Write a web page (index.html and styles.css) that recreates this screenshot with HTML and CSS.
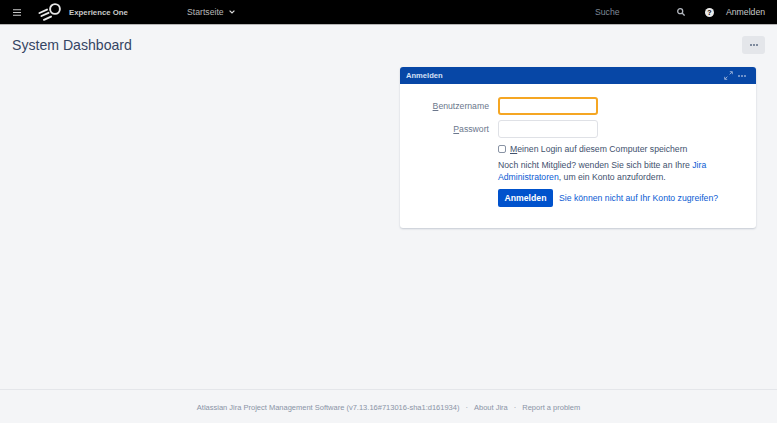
FILE: index.html
```html
<!DOCTYPE html>
<html lang="de">
<head>
<meta charset="utf-8">
<title>System Dashboard</title>
<link rel="stylesheet" href="styles.css">
</head>
<body>
<header class="topbar">
  <svg class="burger" width="8" height="7" viewBox="0 0 8 7"><path d="M0 .75h8M0 3.5h8M0 6.25h8" stroke="#c8c8c8" stroke-width="1.2"/></svg>
  <svg class="logo" width="24" height="18" viewBox="0 0 24 18" fill="none" stroke="#e8e8e8" stroke-width="1.9" stroke-linecap="round"><circle cx="17" cy="6" r="4.9"/><path d="M1.5 10l7.5-3.4M3.5 13l7-3.2M6 16.8l7-3.2"/></svg>
  <span class="brand">Experience One</span>
  <span class="nav-item">Startseite<svg class="chev" width="6" height="4" viewBox="0 0 6 4" fill="none"><path d="M.6.6L3 3l2.4-2.4" stroke="#ddd" stroke-width="1.2"/></svg></span>
  <span class="search">Suche</span>
  <svg class="mag" width="8" height="8" viewBox="0 0 8 8" fill="none" stroke="#b4b8bf" stroke-width="1.3"><circle cx="3.2" cy="3.2" r="2.5"/><path d="M5 5l2.6 2.6"/></svg>
  <span class="help">?</span>
  <span class="login-link">Anmelden</span>
</header>
<main class="content">
  <div class="title-row">
    <h1>System Dashboard</h1>
    <button class="more" type="button"><i></i><i></i><i></i></button>
  </div>
  <div class="columns">
    <div class="col"></div>
    <section class="gadget">
      <div class="gadget-head">
        <span>Anmelden</span>
        <svg class="expand" width="9" height="9" viewBox="0 0 9 9" fill="none" stroke="#8fa9d6" stroke-width="1"><path d="M.8 8.2L3.4 5.6M5.6 3.4L8.2.8M5.8.7h2.5v2.5M.7 5.8v2.5h2.5"/></svg>
        <span class="head-dots"><i></i><i></i><i></i></span>
      </div>
      <form class="gadget-body">
        <div class="row"><label><u>B</u>enutzername</label><input class="field focus" type="text"></div>
        <div class="row second"><label><u>P</u>asswort</label><input class="field" type="password"></div>
        <div class="check"><input type="checkbox" class="box"><span><u>M</u>einen Login auf diesem Computer speichern</span></div>
        <p class="note">Noch nicht Mitglied? wenden Sie sich bitte an Ihre <a>Jira</a><br><a>Administratoren</a>, um ein Konto anzufordern.</p>
        <div class="actions"><button type="button" class="primary">Anmelden</button><a>Sie können nicht auf Ihr Konto zugreifen?</a></div>
      </form>
    </section>
  </div>
</main>
<footer class="footer">
  <span>Atlassian Jira Project Management Software (v7.13.16#713016-sha1:d161934)</span><span class="sep">·</span><span>About Jira</span><span class="sep">·</span><span>Report a problem</span>
</footer>
</body>
</html>
```
FILE: styles.css
```css
* { box-sizing: border-box; }
html, body { height: 100%; }
body {
  margin: 0;
  background: #f4f5f7;
  font-family: "Liberation Sans", Arial, sans-serif;
  font-size: 8.68px;
  color: #172b4d;
  display: flex;
  flex-direction: column;
  overflow: hidden;
}
.topbar {
  height: 25px;
  flex: none;
  background: #000;
  border-bottom: 1px solid #b5b5b5;
  display: flex;
  align-items: center;
  color: #c8c8c8;
}
.burger { margin-left: 13px; }
.logo { margin-left: 17px; }
.brand { margin-left: 7px; width: 118px; font-size: 7.8px; font-weight: bold; color: #c8c8c8; }
.nav-item { display: flex; align-items: center; width: 408px; color: #b8b8b8; }
.chev { margin-left: 5px; }
.search { width: 82px; color: #7f8897; }
.mag { margin-right: 20px; }
.help {
  width: 9px; height: 9px; border-radius: 50%;
  background: #eaeaea; color: #000;
  font-size: 7px; font-weight: bold; line-height: 9px; text-align: center;
}
.login-link { margin-left: 12px; }
.content { flex: 1; min-height: 0; }
.title-row {
  display: flex;
  justify-content: space-between;
  align-items: flex-start;
  padding: 11px 12px 0;
  height: 42px;
}
h1 { margin: 0; font-size: 14.1px; font-weight: 400; line-height: 19px; color: #344563; }
.more {
  width: 23px; height: 18px;
  border: 0; border-radius: 3px; background: #e4e6ea;
  display: flex; align-items: center; justify-content: center; gap: 1px; padding: 0;
}
.more i, .head-dots i { display: block; width: 2px; height: 2px; border-radius: 50%; background: #5e6c84; }
.columns { display: flex; gap: 10px; padding: 0 21px 0 12px; }
.col { flex: 1; }
.gadget {
  width: 356px;
  background: #fff;
  border-radius: 3px;
  box-shadow: 0 1px 2px rgba(9,30,66,.2);
}
.gadget-head {
  height: 17px;
  background: #0747a6;
  border-radius: 3px 3px 0 0;
  color: #d5e0f5;
  font-size: 7.6px;
  font-weight: bold;
  display: flex;
  align-items: center;
  padding: 0 10px 0 6px;
}
.expand { margin-left: auto; margin-right: 1px; }
.head-dots { display: flex; gap: 1px; margin-left: 4px; }
.head-dots i { background: #8fa9d6; }
.gadget-body { padding: 13px 0 0 98px; height: 144px; }
.row { display: flex; align-items: center; position: relative; }
.row.second { margin-top: 5px; }
.row label { position: absolute; right: 100%; margin-right: 9px; white-space: nowrap; color: #6b778c; }
.field {
  width: 100px; height: 18px; margin: 0;
  background: #fff; border: 1px solid #dfe1e6; border-radius: 3px; outline: 0;
}
.field.focus { border: 2px solid #f5a623; }
.check { display: flex; align-items: center; margin-top: 4px; color: #42526e; height: 13px; }
.box {
  appearance: none; margin: 0 4px 0 0;
  width: 8px; height: 8px; background: #fff;
  border: 1px solid #8993a4; border-radius: 2px;
}
.note { margin: 4px 0 0; line-height: 12px; color: #42526e; }
a { color: #0b5bd3; }
.actions { display: flex; align-items: center; margin-top: 6px; }
.actions a { margin-left: 6px; }
.primary {
  width: 55px; height: 18px; padding: 0;
  border: 0; border-radius: 2px;
  background: #0052cc; color: #fff;
  font: bold 8.68px "Liberation Sans", Arial, sans-serif;
}
.footer {
  flex: none;
  height: 34px;
  padding-top: 1px;
  border-top: 1px solid #e4e6ea;
  display: flex;
  align-items: center;
  justify-content: center;
  font-size: 7.5px;
  color: #8a94a6;
}
.sep { margin: 0 6px; }
```
